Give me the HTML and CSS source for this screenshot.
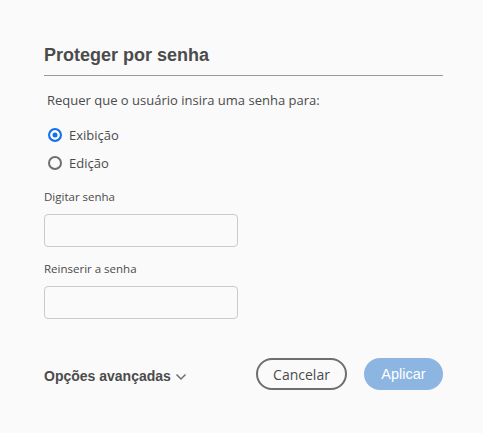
FILE: index.html
```html
<!DOCTYPE html>
<html lang="pt">
<head>
<meta charset="utf-8">
<link rel="stylesheet" href="styles.css">
</head>
<body>
<div class="dialog">
  <h1 class="title">Proteger por senha</h1>
  <div class="rule"></div>
  <p class="desc">Requer que o usuário insira uma senha para:</p>
  <div class="radios">
    <label class="radio"><span class="dot on"></span>Exibição</label>
    <label class="radio"><span class="dot"></span>Edição</label>
  </div>
  <div class="field">
    <div class="label">Digitar senha</div>
    <div class="input"></div>
  </div>
  <div class="field">
    <div class="label">Reinserir a senha</div>
    <div class="input"></div>
  </div>
  <div class="footer">
    <div class="adv">Opções avançadas
      <svg class="chev" width="12" height="8" viewBox="0 0 12 8"><path d="M1.5 1.5 L6 6 L10.5 1.5" fill="none" stroke="#6e6e6e" stroke-width="1.5"/></svg>
    </div>
    <div class="buttons">
      <div class="btn cancel">Cancelar</div>
      <div class="btn apply">Aplicar</div>
    </div>
  </div>
</div>
</body>
</html>
```
FILE: styles.css
```css
html, body { margin: 0; padding: 0; background: #fafafa; }
body { width: 483px; height: 433px; overflow: hidden; font-family: "Open Sans", "Noto Sans", sans-serif; color: #4b4b4b; }
.dialog { padding: 44px 40px 0 44px; }
.title { margin: 0; font-family: "Liberation Sans", Arial, sans-serif; font-weight: bold; font-size: 18px; line-height: 22px; color: #4b4b4b; }
.rule { height: 1px; background: #9a9a9a; margin-top: 9px; width: 399px; }
.desc { margin: 15px 0 0 3px; font-size: 13px; line-height: 18px; color: #4b4b4b; }
.radios { display: flex; flex-direction: column; gap: 10px; margin-top: 17px; margin-left: 4px; }
.radio { display: flex; align-items: center; gap: 7px; font-size: 13px; line-height: 18px; }
.dot { width: 10px; height: 10px; border-radius: 50%; border: 2px solid #6e6e6e; box-sizing: content-box; display: inline-block; }
.dot.on { border-color: #1473e6; background: #1473e6; box-shadow: inset 0 0 0 2.5px #fff; }
.field { margin-top: 17px; }
.field + .field { margin-top: 14px; }
.label { font-size: 11.5px; line-height: 16px; color: #4b4b4b; }
.input { width: 192px; height: 31px; border: 1px solid #cacaca; border-radius: 4px; background: #fafafa; margin-top: 9px; }
.footer { display: flex; justify-content: space-between; align-items: center; margin-top: 39px; width: 399px; }
.adv { font-family: "Liberation Sans", Arial, sans-serif; font-weight: bold; font-size: 14px; color: #4b4b4b; display: flex; align-items: center; gap: 4px; margin-top: 3px; }
.chev { margin-top: 2px; }
.buttons { display: flex; gap: 17px; }
.btn { height: 32px; box-sizing: border-box; border-radius: 16px; display: flex; align-items: center; justify-content: center; font-size: 14px; }
.cancel { width: 91px; border: 2px solid #6e6e6e; color: #4b4b4b; }
.apply { width: 79px; background: #8db5e2; color: #fff; font-family: "Liberation Sans", Arial, sans-serif; font-size: 14.5px; }
```
